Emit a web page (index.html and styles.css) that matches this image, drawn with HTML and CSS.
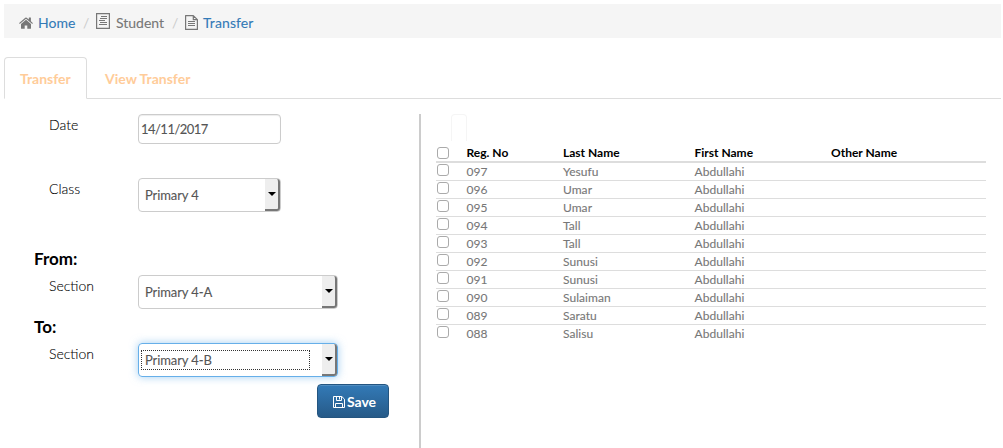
FILE: index.html
```html
<!DOCTYPE html>
<html lang="en">
<head>
<meta charset="utf-8">
<title>Transfer</title>
<link rel="stylesheet" href="styles.css">
</head>
<body>
<nav class="breadcrumb">
  <svg class="ic home" width="14" height="12" viewBox="0 0 14 12"><path fill="#777" d="M7 2.7 2 6.9V11.2q0 .6.6.6H5.700V8.400H8.300V11.800H11.400q.6 0 .6-.6V6.900ZM13.800 5.900 11.900 4.300V.8q0-.3-.3-.3H10.100q-.3 0-.3.3V2.500L7.700.7Q7 .2 6.300.7L.2 5.900q-.2.200 0 .4l.4.5q.2.200.4 0L7 1.800l6 5q.2.200.4 0l.4-.5q.2-.2 0-.4Z"/></svg>
  <a class="home-link">Home</a>
  <span class="slash s1">/</span>
  <svg class="ic list" width="14" height="16" viewBox="0 0 14 16"><path fill="none" stroke="#777" stroke-width="1.200" d="M.6.600H13.400V15.400H.6Z"/><path stroke="#777" d="M5 3.500H11M4 5.500H11M3 7.500H9M4 9.500H11M3 11.500H11" stroke-width="1.100"/></svg>
  <span class="student">Student</span>
  <span class="slash s2">/</span>
  <svg class="ic file" width="13" height="15" viewBox="0 0 13 15"><path fill="none" stroke="#777" stroke-width="1.200" stroke-linejoin="round" d="M.6.600H8.300L12.400 4.700V14.400H.6ZM8.300.600V4.700H12.400"/><path stroke="#777" d="M3 6.500H10M3 8.500H10M3 10.500H10"/></svg>
  <a class="transfer-link">Transfer</a>
</nav>
<div class="tabs"><a class="tab active">Transfer</a><a class="tab">View Transfer</a></div>
<main class="content">
  <form class="form">
    <div class="field date"><label>Date</label><div class="input">14/11/2017</div></div>
    <div class="field class"><label>Class</label><div class="select narrow"><span>Primary 4</span><i class="drop"></i></div></div>
    <h2>From:</h2>
    <div class="field from"><label>Section</label><div class="select"><span>Primary 4-A</span><i class="drop"></i></div></div>
    <h2>To:</h2>
    <div class="field to"><label>Section</label><div class="select focus"><span>Primary 4-B</span><i class="drop"></i></div></div>
    <div class="save"><svg width="12" height="12" viewBox="0 0 12 12"><path fill="none" stroke="#fff" d="M.5.500H8.800L11.500 3.200V11.500H.5ZM2.500 11.500V7.500H9.500V11.500M3.500.500V4.500H8.500V.500M6.500 1V3.500"/></svg><span>Save</span></div>
  </form>
  <section class="list-pane">
    <div class="stub"></div>
    <table>
      <colgroup><col class="c1"><col class="c2"><col class="c3"><col class="c4"><col class="c5"></colgroup>
      <thead><tr><th><i class="check"></i></th><th>Reg. No</th><th>Last Name</th><th>First Name</th><th>Other Name</th></tr></thead>
      <tbody>
      <tr><td><i class="check"></i></td><td>097</td><td>Yesufu</td><td>Abdullahi</td><td></td></tr>
      <tr><td><i class="check"></i></td><td>096</td><td>Umar</td><td>Abdullahi</td><td></td></tr>
      <tr><td><i class="check"></i></td><td>095</td><td>Umar</td><td>Abdullahi</td><td></td></tr>
      <tr><td><i class="check"></i></td><td>094</td><td>Tall</td><td>Abdullahi</td><td></td></tr>
      <tr><td><i class="check"></i></td><td>093</td><td>Tall</td><td>Abdullahi</td><td></td></tr>
      <tr><td><i class="check"></i></td><td>092</td><td>Sunusi</td><td>Abdullahi</td><td></td></tr>
      <tr><td><i class="check"></i></td><td>091</td><td>Sunusi</td><td>Abdullahi</td><td></td></tr>
      <tr><td><i class="check"></i></td><td>090</td><td>Sulaiman</td><td>Abdullahi</td><td></td></tr>
      <tr><td><i class="check"></i></td><td>089</td><td>Saratu</td><td>Abdullahi</td><td></td></tr>
      <tr><td><i class="check"></i></td><td>088</td><td>Salisu</td><td>Abdullahi</td><td></td></tr>
      </tbody>
    </table>
  </section>
</main>
</body>
</html>
```
FILE: styles.css
```css
* { box-sizing: border-box; }
html, body { height: 100%; }
body {
  margin: 0;
  padding: 4px 2px 0 4px;
  overflow: hidden;
  background: #fff;
  color: #777;
  font: 14px/20px Lato, "Liberation Sans", sans-serif;
}
.breadcrumb {
  display: flex;
  height: 34px;
  padding: 0 15px;
  background: #f5f5f5;
  line-height: 38px;
  white-space: nowrap;
}
.breadcrumb a { color: #337ab7; -webkit-text-stroke: .1px #337ab7; }
.ic { display: block; flex: none; }
.home { margin-top: 13px; }
.list { margin-top: 9px; }
.file { margin-top: 11px; }
.home-link { width: 45px; padding-left: 5px; }
.slash { color: #ccc; }
.s1 { width: 18px; padding-left: 5px; }
.student { width: 57px; padding-left: 6px; margin-right: 5px; -webkit-text-stroke: .1px #777; }
.s2 { width: 13px; }
.transfer-link { padding-left: 5px; letter-spacing: .1px; }

.tabs {
  display: flex;
  height: 42px;
  margin-top: 19px;
  border-bottom: 1px solid #ddd;
}
.tab {
  height: 42px;
  padding: 0 15px;
  border: 1px solid transparent;
  border-radius: 4px 4px 0 0;
  color: #ffcc99;
  font-weight: 700;
  line-height: 42px;
  margin-right: 2px;
}
.tab.active { width: 83px; border-color: #ddd #ddd #fff; background: #fff; }

.content { display: flex; height: 349px; }
.form { flex: none; width: 415px; color: #000; }
.field { display: flex; padding-left: 45px; }
.field label {
  width: 89px;
  padding-top: 1px;
  font-weight: 300;
  line-height: 20px;
  -webkit-text-stroke: .1px #000;
}
.date { height: 79px; padding-top: 15px; }
.class { height: 71px; }
.from { height: 42px; }
.to { height: 41px; }
.form h2 {
  height: 26px;
  margin: 0;
  padding-left: 30px;
  font-size: 17px;
  font-weight: 700;
  line-height: 20px;
}
.input {
  width: 143px;
  height: 30px;
  padding-left: 2px;
  border: 1px solid #ccc;
  border-radius: 4px;
  box-shadow: inset 0 1px 1px rgba(0, 0, 0, .075);
  color: #555;
  font-size: 13px;
  letter-spacing: -.53px;
  line-height: 29px;
  -webkit-text-stroke: .1px #555;
}
.select {
  display: flex;
  width: 200px;
  height: 34px;
  padding-left: 6px;
  border: 1px solid #ccc;
  border-radius: 4px;
  color: #555;
  font-size: 13px;
  line-height: 33px;
}
.select span { flex: 1; letter-spacing: -.1px; -webkit-text-stroke: .1px #555; }
.narrow { width: 143px; }
.drop {
  display: flex;
  align-items: center;
  justify-content: center;
  width: 15px;
  height: 32px;
  border: solid #777;
  border-width: 0 2px 2px 0;
  border-radius: 0 3px 3px 0;
  background: #eee;
}
.drop::after {
  content: "";
  margin-left: 1px;
  border: 4px solid transparent;
  border-top: 4px solid #000;
  border-bottom: 0;
}
.focus { border-color: #66afe9; box-shadow: 0 0 8px rgba(102, 175, 233, .6); padding-left: 2px; }
.focus span {
  flex: none;
  width: 169px;
  height: 20px;
  margin: 6px 12px 0 0;
  padding-left: 3px;
  border: 1px dotted #333;
  line-height: 19px;
}
.save {
  display: flex;
  align-items: center;
  justify-content: center;
  gap: 2px;
  width: 72px;
  height: 34px;
  margin-left: 313px;
  padding: 1px 0 0 3px;
  border: 1px solid #245580;
  border-radius: 4px;
  background: linear-gradient(#337ab7, #265a88);
  box-shadow: inset 0 1px 0 rgba(255, 255, 255, .15);
  color: #fff;
  font-weight: 700;
}
.list-pane {
  width: 567px;
  margin-top: 15px;
  padding-left: 15px;
  border-left: 2px solid #ccc;
}
.stub {
  width: 16px;
  height: 27px;
  margin-left: 15px;
  border: solid #f5f5f5;
  border-width: 1px 1px 0;
  border-radius: 4px 4px 0 0;
}
table {
  width: 550px;
  table-layout: fixed;
  border-spacing: 0;
  border-collapse: separate;
  font-size: 12px;
  line-height: 16px;
}
.c1 { width: 30.5px; }
.c2 { width: 96.5px; }
.c3 { width: 131.5px; }
.c4 { width: 136.5px; }
.c5 { width: 155px; }
th, td { padding: 0; text-align: left; vertical-align: top; height: 18px; }
th { height: 22px; padding-top: 4px; border-bottom: 2px solid #ddd; color: #000; }
td { border-bottom: 1px solid #ddd; padding-top: 1px; letter-spacing: .05px; -webkit-text-stroke: .1px #777; }
tr:last-child td { border-bottom: 0; }
.check {
  display: block;
  width: 12px;
  height: 12px;
  margin-left: 1px;
  border: 1px solid #aaa;
  border-radius: 3px;
  background: #fff;
}
th .check { margin-top: 2px; }
```
